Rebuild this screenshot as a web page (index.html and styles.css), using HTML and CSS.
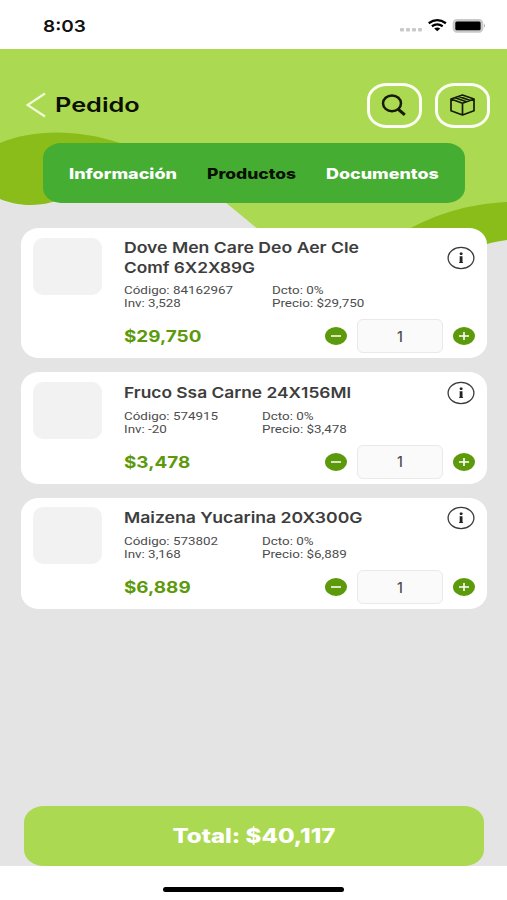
FILE: index.html
```html
<!DOCTYPE html>
<html lang="es">
<head>
<meta charset="utf-8">
<title>Pedido</title>
<link rel="stylesheet" href="styles.css">
</head>
<body>
<svg class="defs" width="0" height="0" aria-hidden="true">
  <symbol id="info" viewBox="0 0 28 24"><ellipse cx="14" cy="12" rx="12.900" ry="10.600" fill="#fff" stroke="#3a3a3a" stroke-width="1.300"/><path d="M12.600 10.200h2.900v6h.6v.9h-4.100v-.9h.7v-5h-.1z" fill="#222"/><rect x="12.700" y="6.500" width="2.900" height="2.400" rx=".8" fill="#222"/></symbol>
  <symbol id="minus" viewBox="0 0 22 18"><ellipse cx="11" cy="9" rx="11" ry="9" fill="#5c9a0c"/><path d="M6 9h10" stroke="#fff" stroke-width="1.500"/></symbol>
  <symbol id="plus" viewBox="0 0 22 18"><ellipse cx="11" cy="9" rx="11" ry="9" fill="#5c9a0c"/><path d="M6 9h10M11 5v8" stroke="#fff" stroke-width="1.600"/></symbol>
</svg>
<div class="screen">
  <div class="status">
    <span class="time fit">8:03</span>
    <svg width="88" height="18" viewBox="0 0 88 18">
      <g fill="#c9c9c9"><rect x="1" y="11" width="4" height="3.500" rx="1"/><rect x="7" y="11" width="4" height="3.500" rx="1"/><rect x="13" y="11" width="4" height="3.500" rx="1"/><rect x="19" y="11" width="4" height="3.500" rx="1"/></g>
      <g fill="none" stroke="#000" stroke-width="2.300"><path d="M29.700 6.200Q38.200 .2 46.900 6.200"/><path d="M32.900 9.300Q38.200 5.500 43.700 9.300"/></g>
      <path d="M35.200 11.500Q38.200 9.400 41.300 11.500L38.200 14.300z"/>
      <rect x="54.500" y="2.800" width="29" height="12" rx="3.500" fill="#ccc" stroke="#c9c9c9" stroke-width="1.700"/><rect x="56.300" y="4.500" width="25.300" height="8.700" rx="1.500"/><path d="M85 6.800q2 2 0 4z" fill="#aaa"/>
    </svg>
  </div>
  <main class="main">
    <svg class="scene" width="507" height="220" viewBox="0 0 507 220">
      <path d="M0 0H507V165C470 165 450 182 415 190H270L225 153C190 120 90 100 0 103z" fill="#acd952"/>
      <path d="M0 94C33 80 78 80 120 94C125 125 90 145 52 153C32 159 12 155 0 150z" fill="#8abd1a"/>
      <path d="M405 182C435 166 465 155 507 153V191C490 193 478 198 465 202L405 205z" fill="#8abd1a"/>
    </svg>
    <header class="header">
      <svg class="back" width="20" height="26" viewBox="0 0 20 26"><path d="M19 1.500L1.500 13L19 24.500" fill="none" stroke="#f0fbd8" stroke-width="2.200"/></svg>
      <h1><span class="fit">Pedido</span></h1>
      <button class="tool"><svg width="28" height="24" viewBox="0 0 28 24"><ellipse cx="12" cy="10.300" rx="9" ry="7.900" fill="none" stroke="#141c05" stroke-width="2.500"/><path d="M18 16L24.800 21.800" stroke="#141c05" stroke-width="3"/></svg></button>
      <button class="tool"><svg width="28" height="24" viewBox="0 0 28 24"><path d="M14.500 2L26 6V17.800L14.500 22L3 17.800V6zM3 6L14.500 10.300L26 6M14.500 10.300V22M7 4.700L18.500 8.800M10.700 3.400L22.200 7.500" fill="none" stroke="#141c05" stroke-width="1.700" stroke-linejoin="round"/></svg></button>
    </header>
    <nav class="tabs">
      <a class="t1"><span class="fit">Información</span></a><a class="t2 active"><span class="fit">Productos</span></a><a class="t3"><span class="fit">Documentos</span></a>
    </nav>
    <section class="list">
      <article class="card">
        <div class="thumb"></div>
        <div class="body">
          <div class="head"><h2 class="n1"><span class="fit">Dove Men Care Deo Aer Cle</span><br><span class="fit comf">Comf 6X2X89G</span></h2><svg class="info" width="28" height="24"><use href="#info"/></svg></div>
          <div class="details wide"><p><span class="fit">Código: 84162967</span><br><span class="fit">Inv: 3,528</span></p><p><span class="fit">Dcto: 0%</span><br><span class="fit">Precio: $29,750</span></p></div>
          <div class="buy"><strong><span class="fit">$29,750</span></strong><svg width="22" height="18"><use href="#minus"/></svg><div class="qty"><span>1</span></div><svg width="22" height="18"><use href="#plus"/></svg></div>
        </div>
      </article>
      <article class="card">
        <div class="thumb"></div>
        <div class="body">
          <div class="head"><h2 class="n2"><span class="fit">Fruco Ssa Carne 24X156Ml</span></h2><svg class="info" width="28" height="24"><use href="#info"/></svg></div>
          <div class="details"><p><span class="fit">Código: 574915</span><br><span class="fit">Inv: -20</span></p><p><span class="fit">Dcto: 0%</span><br><span class="fit">Precio: $3,478</span></p></div>
          <div class="buy"><strong><span class="fit">$3,478</span></strong><svg width="22" height="18"><use href="#minus"/></svg><div class="qty"><span>1</span></div><svg width="22" height="18"><use href="#plus"/></svg></div>
        </div>
      </article>
      <article class="card">
        <div class="thumb"></div>
        <div class="body">
          <div class="head"><h2 class="n3"><span class="fit">Maizena Yucarina 20X300G</span></h2><svg class="info" width="28" height="24"><use href="#info"/></svg></div>
          <div class="details"><p><span class="fit">Código: 573802</span><br><span class="fit">Inv: 3,168</span></p><p><span class="fit">Dcto: 0%</span><br><span class="fit">Precio: $6,889</span></p></div>
          <div class="buy"><strong><span class="fit">$6,889</span></strong><svg width="22" height="18"><use href="#minus"/></svg><div class="qty"><span>1</span></div><svg width="22" height="18"><use href="#plus"/></svg></div>
        </div>
      </article>
    </section>
    <button class="total"><span>Total: $40,117</span></button>
  </main>
  <footer class="home"><i></i></footer>
</div>
</body>
</html>
```
FILE: styles.css
```css
* { box-sizing: border-box; }
body { margin: 0; font-family: Inter, "Liberation Sans", sans-serif; color: #333; }
h1, h2, p { margin: 0; }
button { border: 0; padding: 0; background: none; font-family: inherit; }
.defs { position: absolute; }
.fit { display: inline-block; transform: scaleX(var(--sx, 1.1)); transform-origin: 0 50%; white-space: nowrap; }
.screen { width: 507px; height: 900px; display: flex; flex-direction: column; background: #fff; overflow: hidden; }
.status { height: 49px; flex: none; display: flex; justify-content: space-between; align-items: flex-start; padding: 17px 20px 0 42.5px; }
.time { --sx: 1.15; font-size: 16.5px; line-height: 18px; font-weight: 600; color: #111; }
.main { position: relative; height: 816.5px; flex: none; display: flex; flex-direction: column; background: #e4e4e4; }
.scene { position: absolute; left: 0; top: 0; }
.header { position: relative; height: 94px; display: flex; align-items: center; padding: 18px 17.5px 0 26px; }
.header h1 { --sx: 1.265; margin-left: 9px; flex: 1; font-size: 20px; line-height: 26px; font-weight: 600; color: #0b1000; }
.tool { width: 55px; height: 45px; border: 3px solid #fcfff4; border-radius: 20px / 17px; display: flex; align-items: center; justify-content: center; margin-left: 13px; }
.tabs { position: relative; width: 422px; height: 60px; margin-left: 43px; padding: 1px 0 0 25.5px; border-radius: 18px / 15px; background: #46ad33; display: flex; align-items: center; font-size: 14.7px; line-height: 20px; font-weight: 800; color: #fff; }
.t1 { width: 138.5px; --sx: 1.225; }
.t2 { width: 119px; --sx: 1.19; }
.t3 { --sx: 1.22; }
.active { color: #081000; }
.list { position: relative; display: flex; flex-direction: column; gap: 13.8px; padding: 25px 20px 0 21px; }
.card { display: flex; background: #fff; border-radius: 18px / 16px; padding: 9.8px 12px 5px 12px; }
.thumb { width: 69px; height: 57px; border-radius: 10px; background: #f2f2f2; margin-right: 22px; }
.body { flex: 1; }
.head { display: flex; justify-content: space-between; align-items: center; min-height: 21px; margin-bottom: 6.5px; }
.head h2 { font-size: 14.8px; line-height: 20px; font-weight: 600; color: #3d3d3d; }
.n1, .n3 { --sx: 1.19; }
.comf { --sx: 1.165; }
.n2 { --sx: 1.172; }
.info { margin: -2px 0; }
.details { display: grid; grid-template-columns: 137.5px 1fr; font: 11.5px/13px Roboto, sans-serif; color: #4c4c4c; --sx: 1.165; }
.details.wide { grid-template-columns: 147.5px 1fr; }
.buy { display: flex; align-items: center; margin-top: 9.2px; }
.buy strong { flex: 1; --sx: 1.18; font-size: 16px; font-weight: 700; color: #5c9a0c; }
.qty { width: 86px; height: 34px; margin: 0 10px; border: 1px solid #e9e9e9; border-radius: 6px; background: #fafafa; display: flex; align-items: center; justify-content: center; font-size: 14px; font-weight: 500; color: #4c4c4c; }
.total { width: 460px; height: 59.5px; margin: auto 0 0 24px; border-radius: 20px / 16px; background: #acd952; color: #fff; font-size: 20px; font-weight: 800; }
.total span { display: inline-block; transform: scaleX(1.2); }
.home { flex: 1; display: flex; justify-content: center; padding-top: 21.5px; }
.home i { width: 181px; height: 5px; border-radius: 3px; background: #000; }
```
